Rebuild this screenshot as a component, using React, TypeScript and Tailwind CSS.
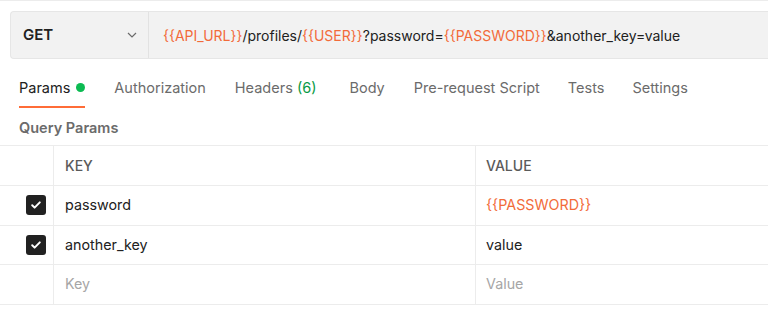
import React from "react";

const Var = ({ children }: { children: React.ReactNode }) => (
  <span className="text-[#f26b3a]">{children}</span>
);

const Checkbox = () => (
  <div className="w-[20px] h-[20px] rounded-[3px] bg-[#212121] flex items-center justify-center">
    <svg viewBox="0 0 12 12" className="w-[12px] h-[12px]" fill="none">
      <path
        d="M2.2 6.3l2.4 2.3 5.2-5.2"
        stroke="#fff"
        strokeWidth="2"
        strokeLinecap="round"
        strokeLinejoin="round"
      />
    </svg>
  </div>
);

const rows = [
  { key: "password", value: "{{PASSWORD}}", isVar: true, h: "h-[40px]" },
  { key: "another_key", value: "value", isVar: false, h: "h-[39px]" },
];

const App = () => {
  return (
    <div
      className="w-[768px] h-[323px] bg-white overflow-hidden border-t border-[#ececec]"
      style={{ fontFamily: "Inter, 'Noto Sans', sans-serif" }}
    >
      {/* url bar */}
      <div className="pl-[10px] pt-[10px]">
        <div className="flex h-[48px] bg-[#f2f2f2] border border-r-0 border-[#e6e6e6] rounded-l-[4px]">
          <div className="w-[138px] flex items-center justify-between pl-[12px] pr-[10px] border-r border-[#e2e2e2]">
            <span className="text-[15px] font-semibold text-[#212121]">GET</span>
            <svg viewBox="0 0 12 12" className="w-[12px] h-[12px]" fill="none">
              <path d="M2 4l4 4 4-4" stroke="#6b6b6b" strokeWidth="1.2" />
            </svg>
          </div>
          <div className="flex items-center pl-[14px] text-[14px] text-[#212121] whitespace-nowrap">
            <Var>{"{{API_URL}}"}</Var>/profiles/<Var>{"{{USER}}"}</Var>?password=
            <Var>{"{{PASSWORD}}"}</Var>&another_key=value
          </div>
        </div>
      </div>

      {/* tabs */}
      <div className="flex items-start pl-[19px] mt-[18px] text-[14.5px] text-[#6b6b6b]">
        <div className="flex flex-col">
          <div className="flex items-center gap-[6px] text-[#212121]">
            <span>Params</span>
            <span className="w-[9px] h-[9px] rounded-full bg-[#0cbb52]" />
          </div>
          <div className="mt-[7px] h-[2px] bg-[#ff6c37]" />
        </div>
        <span className="ml-[29px]">Authorization</span>
        <span className="ml-[29px]">
          Headers <span className="text-[#079a45]">(6)</span>
        </span>
        <span className="ml-[33px]">Body</span>
        <span className="ml-[29px]">Pre-request Script</span>
        <span className="ml-[28px]">Tests</span>
        <span className="ml-[28px]">Settings</span>
      </div>

      <div className="pl-[19px] mt-[9px] text-[14.5px] font-semibold text-[#6b6b6b]">
        Query Params
      </div>

      {/* table */}
      <div className="mt-[6px] border-t border-[#ececec] text-[14.3px]">
        <div className="grid grid-cols-[54px_422px_1fr] h-[40px] border-b border-[#ececec]">
          <div className="border-r border-[#ececec]" />
          <div className="border-r border-[#ececec] flex items-center pl-[11px] text-[14px] font-medium text-[#5a5a5a]">
            KEY
          </div>
          <div className="flex items-center pl-[10px] text-[14px] font-medium text-[#5a5a5a]">
            VALUE
          </div>
        </div>
        {rows.map((r) => (
          <div
            key={r.key}
            className={`grid grid-cols-[54px_422px_1fr] ${r.h} border-b border-[#ececec]`}
          >
            <div className="border-r border-[#ececec] flex items-center justify-end pr-[7px]">
              <Checkbox />
            </div>
            <div className="border-r border-[#ececec] flex items-center pl-[11px] text-[#212121]">
              {r.key}
            </div>
            <div
              className={
                r.isVar
                  ? "flex items-center pl-[10px] text-[#f26b3a]"
                  : "flex items-center pl-[10px] text-[#212121]"
              }
            >
              {r.value}
            </div>
          </div>
        ))}
        <div className="grid grid-cols-[54px_422px_1fr] h-[40px] border-b border-[#ececec]">
          <div className="border-r border-[#ececec]" />
          <div className="border-r border-[#ececec] flex items-center pl-[11px] text-[#a6a6a6]">
            Key
          </div>
          <div className="flex items-center pl-[10px] text-[#a6a6a6]">Value</div>
        </div>
      </div>
    </div>
  );
};

export default App;
